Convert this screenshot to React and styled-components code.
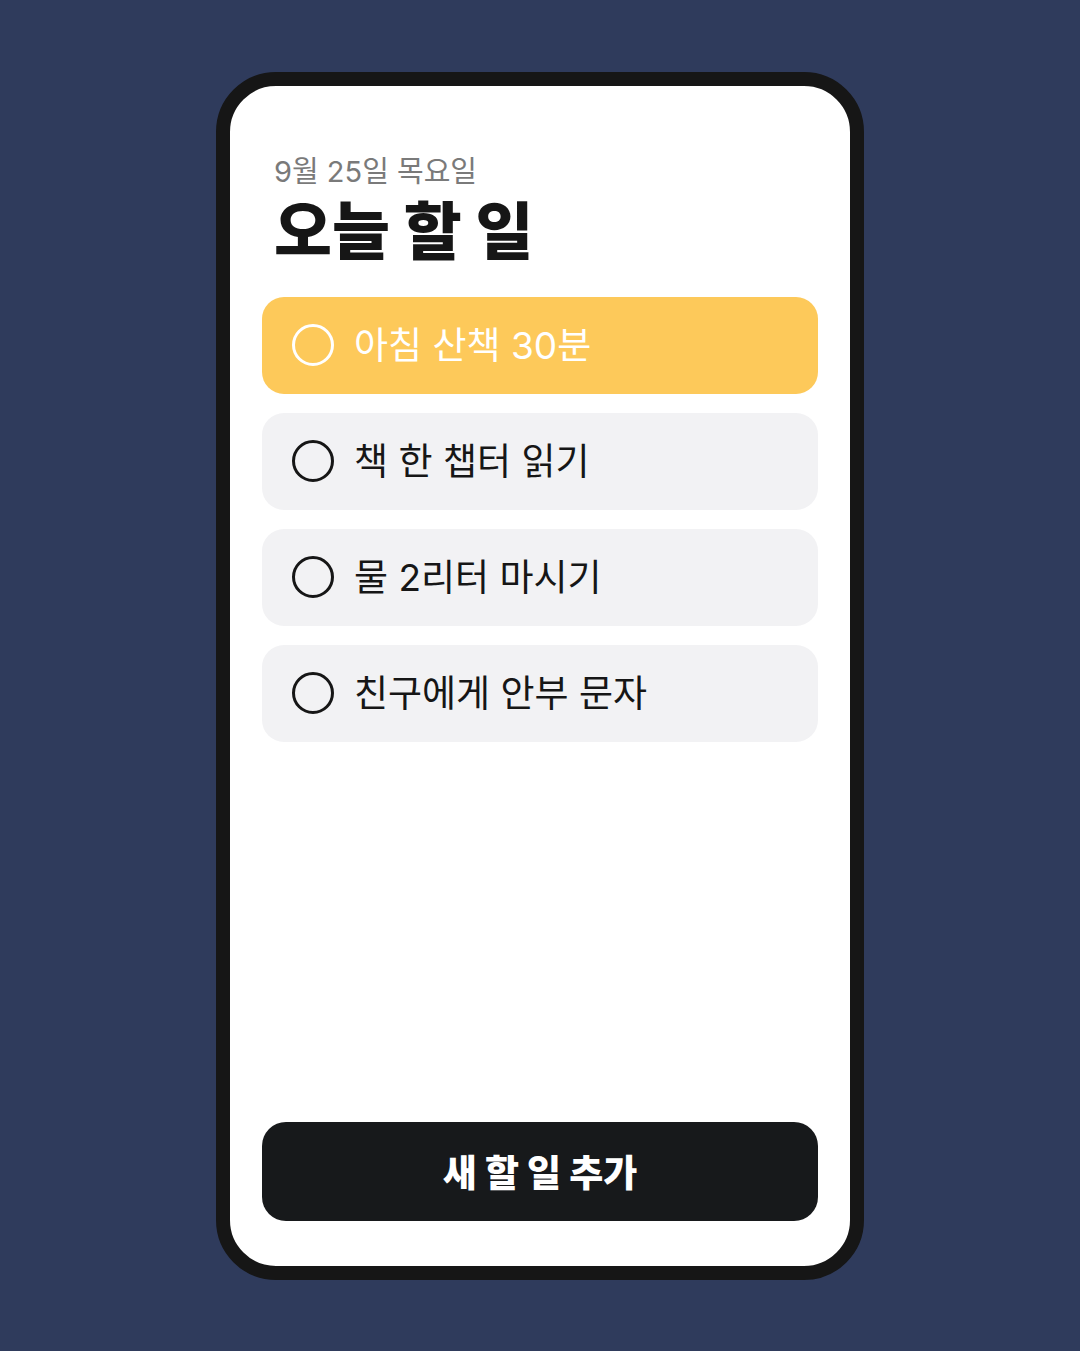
import React from 'react';
import styled, { createGlobalStyle } from 'styled-components';

const GlobalStyle = createGlobalStyle`
  html, body {
    margin: 0;
    padding: 0;
    background: #2f3b5c;
  }
  body {
    font-family: Inter, "Noto Sans CJK KR", sans-serif;
  }
`;

const Page = styled.div`
  width: 1080px;
  height: 1351px;
  display: flex;
  align-items: center;
  justify-content: center;
  background: #2f3b5c;
`;

const Phone = styled.div`
  box-sizing: border-box;
  width: 648px;
  height: 1208px;
  border: 14px solid #161616;
  border-radius: 60px;
  background: #ffffff;
  padding: 66px 32px 45px;
  display: flex;
  flex-direction: column;
`;

const Header = styled.header`
  display: flex;
  flex-direction: column;
  padding-left: 12px;
`;

const DateLine = styled.div`
  font-size: 29px;
  line-height: 40px;
  color: #7a7a7a;
`;

const Title = styled.h1`
  margin: 0;
  font-size: 63px;
  line-height: 78px;
  font-weight: 800;
  color: #161616;
`;

const TaskList = styled.ul`
  list-style: none;
  margin: 27px 0 0;
  padding: 0;
  display: flex;
  flex-direction: column;
  gap: 19px;
  flex: 1;
`;

const TaskRow = styled.li`
  height: 97px;
  box-sizing: border-box;
  border-radius: 22px;
  padding: 0 30px;
  display: flex;
  align-items: center;
  gap: 20px;
  background: ${props => (props.$active ? '#fdc95a' : '#f2f2f4')};
  color: ${props => (props.$active ? '#ffffff' : '#161616')};
`;

const Check = styled.span`
  box-sizing: border-box;
  width: 42px;
  height: 42px;
  border-radius: 50%;
  border: 3px solid currentColor;
  flex-shrink: 0;
`;

const TaskText = styled.span`
  font-size: 37px;
  line-height: 1;
`;

const AddButton = styled.button`
  height: 99px;
  width: 100%;
  border: none;
  border-radius: 24px;
  background: #17191b;
  color: #ffffff;
  font-family: Inter, "Noto Sans CJK KR", sans-serif;
  font-size: 37px;
  font-weight: 800;
  display: flex;
  align-items: center;
  justify-content: center;
`;

const tasks = [
  { id: 1, text: '아침 산책 30분', active: true },
  { id: 2, text: '책 한 챕터 읽기' },
  { id: 3, text: '물 2리터 마시기' },
  { id: 4, text: '친구에게 안부 문자' }
];

const App = () => (
  <Page>
    <GlobalStyle />
    <Phone>
      <Header>
        <DateLine>9월 25일 목요일</DateLine>
        <Title>오늘 할 일</Title>
      </Header>
      <TaskList>
        {tasks.map(task => (
          <TaskRow key={task.id} $active={task.active}>
            <Check />
            <TaskText>{task.text}</TaskText>
          </TaskRow>
        ))}
      </TaskList>
      <AddButton>새 할 일 추가</AddButton>
    </Phone>
  </Page>
);

export default App;
